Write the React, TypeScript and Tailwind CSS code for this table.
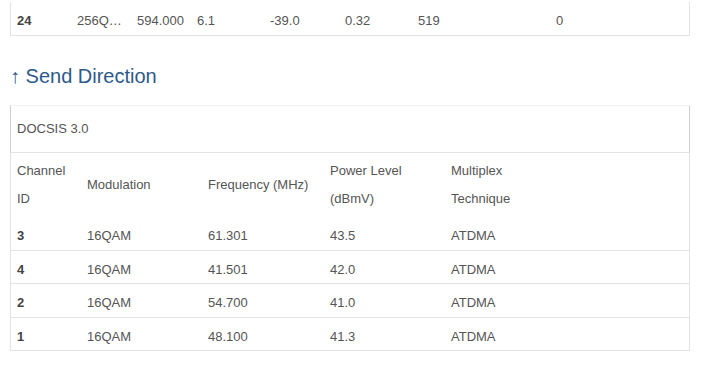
const font = { fontFamily: '"Liberation Sans", Arial, sans-serif' };

const sendRows = [
  { id: '3', mod: '16QAM', freq: '61.301', power: '43.5', tech: 'ATDMA' },
  { id: '4', mod: '16QAM', freq: '41.501', power: '42.0', tech: 'ATDMA' },
  { id: '2', mod: '16QAM', freq: '54.700', power: '41.0', tech: 'ATDMA' },
  { id: '1', mod: '16QAM', freq: '48.100', power: '41.3', tech: 'ATDMA' },
];

export default function App() {
  return (
    <div className="min-h-[384px] bg-white px-[10px] pt-[2px] text-[13px] text-[#555]" style={font}>
      {/* tail of the receive table */}
      <div className="w-[680px] border-x border-b border-[#e3e3e3]">
        <div className="grid grid-cols-[60px_60px_60px_73px_75px_73px_138px_1fr] pt-[9px] pb-[4px] leading-[20px]">
          <div className="pl-[6px] font-bold text-[#444]">24</div>
          <div className="pl-[6px]">256Q…</div>
          <div className="pl-[6px]">594.000</div>
          <div className="pl-[6px]">6.1</div>
          <div className="pl-[6px]">-39.0</div>
          <div className="pl-[6px]">0.32</div>
          <div className="pl-[6px]">519</div>
          <div className="pl-[6px]">0</div>
        </div>
      </div>

      {/* Send Direction */}
      <h2 className="mt-[26px] mb-[15px] text-[20px] leading-[28px] text-[#2e5a8a]">↑ Send Direction</h2>

      <div className="w-[680px]">
        <div className="border-t border-x border-b border-t-[#f2f2f2] border-x-[#d0d0d0] border-b-[#e3e3e3] px-[6px] py-[13px] leading-[20px]">
          DOCSIS 3.0
        </div>
        <div className="border-x border-b border-[#e3e3e3]">
          <div className="grid grid-cols-[70px_121px_122px_121px_1fr] items-center pt-[4px] pb-[4px] leading-[28px]">
            <div className="pl-[6px]">Channel<br />ID</div>
            <div className="pl-[6px]">Modulation</div>
            <div className="pl-[6px]">Frequency (MHz)</div>
            <div className="pl-[6px]">Power Level<br />(dBmV)</div>
            <div className="pl-[6px]">Multiplex<br />Technique</div>
          </div>
          {sendRows.map((r, i) => (
            <div
              key={r.id}
              className={`grid grid-cols-[70px_121px_122px_121px_1fr] pt-[9px] pb-[3.5px] leading-[20px] ${
                i < sendRows.length - 1 ? 'border-b border-[#e3e3e3]' : ''
              }`}
            >
              <div className="pl-[6px] font-bold text-[#444]">{r.id}</div>
              <div className="pl-[6px]">{r.mod}</div>
              <div className="pl-[6px]">{r.freq}</div>
              <div className="pl-[6px]">{r.power}</div>
              <div className="pl-[6px]">{r.tech}</div>
            </div>
          ))}
        </div>
      </div>
    </div>
  );
}
